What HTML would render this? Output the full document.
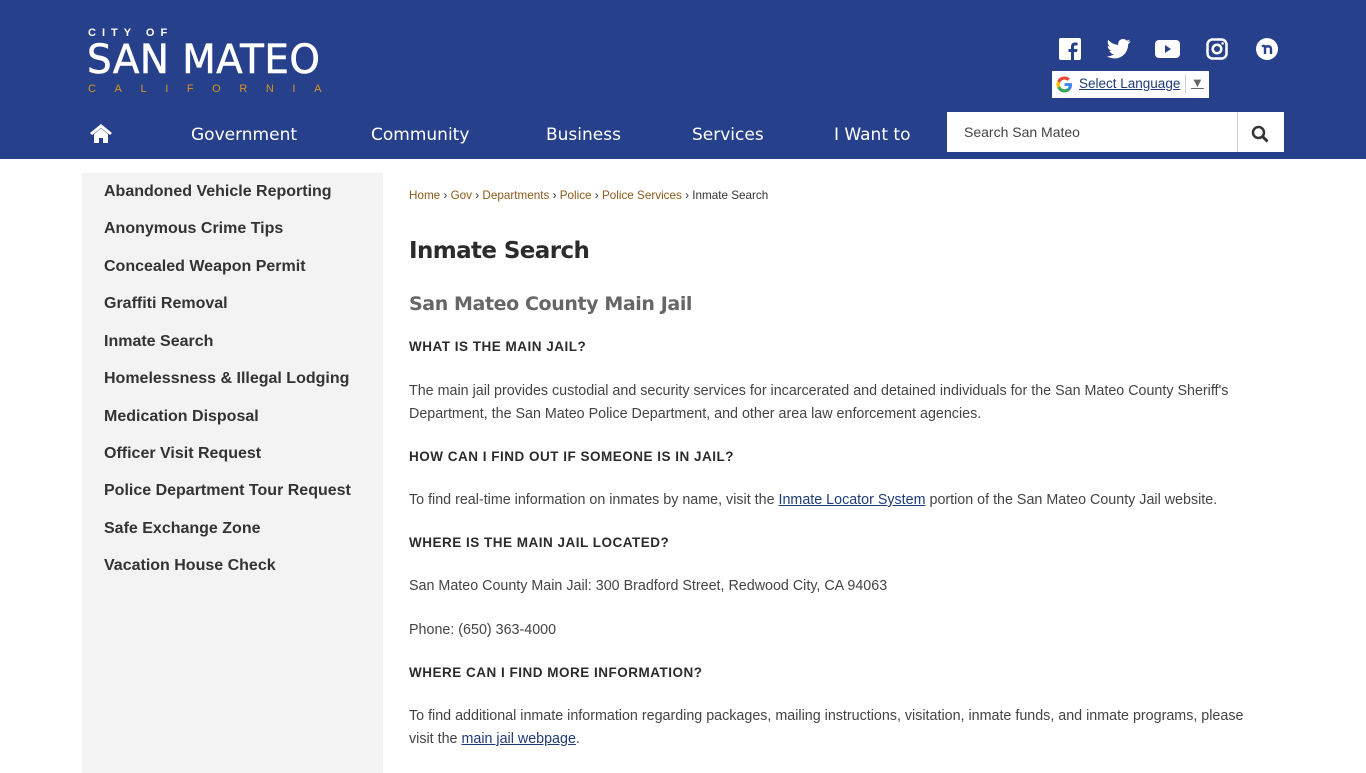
<!DOCTYPE html>
<html><head><meta charset="utf-8"><style>
*{margin:0;padding:0;box-sizing:border-box}
body{width:1366px;height:768px;overflow:hidden;background:#fff;font-family:"Liberation Sans",sans-serif;color:#333}
header{position:absolute;left:0;top:0;width:1366px;height:159px;background:#27408b}
.logo{position:absolute;left:87px;top:27px;color:#fff;width:260px}
.cityof{font-size:11px;font-weight:bold;letter-spacing:6px;position:absolute;left:1px;top:0;white-space:nowrap}
.sm{position:absolute;left:0;top:10px;font-size:40px;letter-spacing:0.5px;white-space:nowrap;font-family:"DejaVu Sans",sans-serif;transform:scaleX(0.97);transform-origin:left;-webkit-text-stroke:0.6px #fff}
.ca{position:absolute;left:1px;top:56px;font-size:11px;color:#d9941e;letter-spacing:18.6px;white-space:nowrap}
.nav{position:absolute;top:125px;color:#fff;font-size:17px;font-family:"DejaVu Sans",sans-serif}
.search{position:absolute;left:947px;top:112px;width:337px;height:40px;background:#fff}
.search span{position:absolute;left:17px;top:12px;font-size:14px;color:#444}
.search .sb{position:absolute;left:290px;top:0;width:1px;height:40px;background:#ccc}
.lang{position:absolute;left:1052px;top:71px;width:157px;height:27px;background:#fff;font-size:14px}
.side{position:absolute;left:82px;top:173px;width:301px;height:600px;background:#f3f3f3}
.side div{position:absolute;left:22px;font-size:16px;font-weight:bold;color:#333;white-space:nowrap}
.main{position:absolute;left:409px;top:0;width:860px}
.bc{position:absolute;top:189px;font-size:11.7px;white-space:nowrap;color:#333}
.bc a{color:#8a5a1a;text-decoration:none}
h1{position:absolute;top:238px;font-size:23px;font-weight:bold;color:#2b2b2b;font-family:"DejaVu Sans",sans-serif;letter-spacing:-0.6px;white-space:nowrap}
h2{position:absolute;top:293px;font-size:19px;font-weight:bold;color:#666;font-family:"DejaVu Sans",sans-serif;letter-spacing:-0.4px;white-space:nowrap}
.h4{position:absolute;font-size:13.5px;font-weight:bold;letter-spacing:0.5px;color:#2b2b2b;white-space:nowrap}
.p{position:absolute;font-size:14.3px;line-height:23px;color:#444;width:850px}
.p a{color:#1f3a7a;text-decoration:underline}
</style></head><body>
<header>
<div class="logo"><div class="cityof">CITY OF</div><div class="sm">SAN MATEO</div><div class="ca">CALIFORNIA</div></div>
<svg style="position:absolute;left:89px;top:123px" width="24" height="20" viewBox="0 0 24 20"><path d="M12 1L1 10l2 2 9-7 9 7 2-2z" fill="#fff"/><path d="M5 11v9h5v-5h4v5h5v-9l-7-5.5z" fill="#fff"/></svg>
<div class="nav" style="left:191px">Government</div>
<div class="nav" style="left:371px">Community</div>
<div class="nav" style="left:546px">Business</div>
<div class="nav" style="left:692px">Services</div>
<div class="nav" style="left:834px">I Want to</div>
<div class="search"><span>Search San Mateo</span><div class="sb"></div>
<svg style="position:absolute;left:304px;top:13px" width="18" height="18" viewBox="0 0 18 18"><circle cx="7.5" cy="7.5" r="5.5" stroke="#333" stroke-width="2.5" fill="none"/><path d="M11.5 11.5l5 5" stroke="#333" stroke-width="3"/></svg></div>
<svg style="position:absolute;left:1059px;top:38px" width="22" height="22"><rect width="22" height="22" rx="2" fill="#fff"/><path d="M15 22v-8h3l.5-3H15V9c0-1 .4-1.6 1.6-1.6H18.6V4.7C18 4.6 17 4.5 16 4.5c-2.5 0-4 1.5-4 4V11H9.5v3H12v8z" fill="#27408b"/></svg>
<svg style="position:absolute;left:1107px;top:39px" width="24" height="20" viewBox="0 0 24 20"><path d="M23.5 2.3c-.9.4-1.8.6-2.8.8 1-.6 1.8-1.6 2.1-2.7-.9.6-2 1-3.1 1.2C18.8.6 17.5 0 16 0c-2.7 0-4.8 2.2-4.8 4.8 0 .4 0 .8.1 1.1C7.3 5.7 3.7 3.8 1.4.9 1 1.6.7 2.4.7 3.3.7 5 1.6 6.5 2.9 7.4c-.8 0-1.5-.2-2.2-.6v.1c0 2.3 1.7 4.3 3.900 4.7-.4.1-.8.2-1.3.2-.3 0-.6 0-.9-.1.6 1.9 2.4 3.3 4.5 3.4-1.7 1.3-3.7 2.1-6 2.1H0c2.1 1.4 4.7 2.2 7.4 2.2 8.9 0 13.7-7.4 13.7-13.7v-.6c.9-.7 1.7-1.5 2.4-2.5z" fill="#fff"/></svg>
<svg style="position:absolute;left:1155px;top:40px" width="25" height="18"><rect width="25" height="18" rx="4" fill="#fff"/><path d="M10 5l6 4-6 4z" fill="#27408b"/></svg>
<svg style="position:absolute;left:1206px;top:38px" width="22" height="22"><rect x="1.5" y="1.5" width="19" height="19" rx="5" stroke="#fff" stroke-width="2.5" fill="none"/><circle cx="11" cy="11" r="4.3" stroke="#fff" stroke-width="2.5" fill="none"/><circle cx="16.6" cy="5.4" r="1.3" fill="#fff"/></svg>
<svg style="position:absolute;left:1256px;top:38px" width="22" height="22"><circle cx="11" cy="11" r="11" fill="#fff"/><path d="M6 8.5c1.5-1 3-1 3 1V16M9 10c0-2 6-3 6 1v5" stroke="#27408b" stroke-width="2.4" fill="none"/></svg>
<div class="lang">
<svg style="position:absolute;left:4px;top:5px" width="17" height="17" viewBox="0 0 18 18"><path d="M17 9.2c0-.6 0-1.1-.1-1.6H9v3h4.5c-.2 1.1-.8 2-1.7 2.6v2.1h2.7C16.1 13.9 17 11.8 17 9.2z" fill="#4285f4"/><path d="M9 17.5c2.3 0 4.2-.8 5.5-2.1l-2.7-2.1c-.7.5-1.7.8-2.8.8-2.2 0-4-1.5-4.7-3.4H1.5v2.2C2.9 15.7 5.7 17.5 9 17.5z" fill="#34a853"/><path d="M4.3 10.7c-.2-.5-.3-1.1-.3-1.7s.1-1.2.3-1.7V5.1H1.5C.9 6.3.5 7.6.5 9s.4 2.7 1 3.9z" fill="#fbbc05"/><path d="M9 3.9c1.2 0 2.3.4 3.2 1.3l2.4-2.4C13.2 1.3 11.3.5 9 .5 5.7.5 2.9 2.3 1.5 5.1l2.8 2.2C5 5.3 6.8 3.9 9 3.9z" fill="#ea4335"/></svg>
<span style="position:absolute;left:27px;top:5px;color:#1f3a7a;text-decoration:underline;font-size:13.5px">Select Language</span>
<span style="position:absolute;left:133px;top:4px;width:1px;height:18px;background:#ccc"></span>
<span style="position:absolute;left:139px;top:4px;color:#666;font-size:13px;text-decoration:underline">▼</span>
</div>
</header>
<div class="side">
<div style="top:10px">Abandoned Vehicle Reporting</div>
<div style="top:47px">Anonymous Crime Tips</div>
<div style="top:85px">Concealed Weapon Permit</div>
<div style="top:122px">Graffiti Removal</div>
<div style="top:160px">Inmate Search</div>
<div style="top:197px">Homelessness &amp; Illegal Lodging</div>
<div style="top:235px">Medication Disposal</div>
<div style="top:272px">Officer Visit Request</div>
<div style="top:309px">Police Department Tour Request</div>
<div style="top:347px">Safe Exchange Zone</div>
<div style="top:384px">Vacation House Check</div>
</div>
<div class="main">
<div class="bc"><a>Home</a> › <a>Gov</a> › <a>Departments</a> › <a>Police</a> › <a>Police Services</a> › Inmate Search</div>
<h1>Inmate Search</h1>
<h2>San Mateo County Main Jail</h2>
<div class="h4" style="top:339px">WHAT IS THE MAIN JAIL?</div>
<div class="p" style="top:380px">The main jail provides custodial and security services for incarcerated and detained individuals for the San Mateo County Sheriff's Department, the San Mateo Police Department, and other area law enforcement agencies.</div>
<div class="h4" style="top:449px">HOW CAN I FIND OUT IF SOMEONE IS IN JAIL?</div>
<div class="p" style="top:489px">To find real-time information on inmates by name, visit the <a>Inmate Locator System</a> portion of the San Mateo County Jail website.</div>
<div class="h4" style="top:535px">WHERE IS THE MAIN JAIL LOCATED?</div>
<div class="p" style="top:575px">San Mateo County Main Jail: 300 Bradford Street, Redwood City, CA 94063</div>
<div class="p" style="top:619px">Phone: (650) 363-4000</div>
<div class="h4" style="top:665px">WHERE CAN I FIND MORE INFORMATION?</div>
<div class="p" style="top:705px">To find additional inmate information regarding packages, mailing instructions, visitation, inmate funds, and inmate programs, please visit the <a>main jail webpage</a>.</div>
</div>
</body></html>
